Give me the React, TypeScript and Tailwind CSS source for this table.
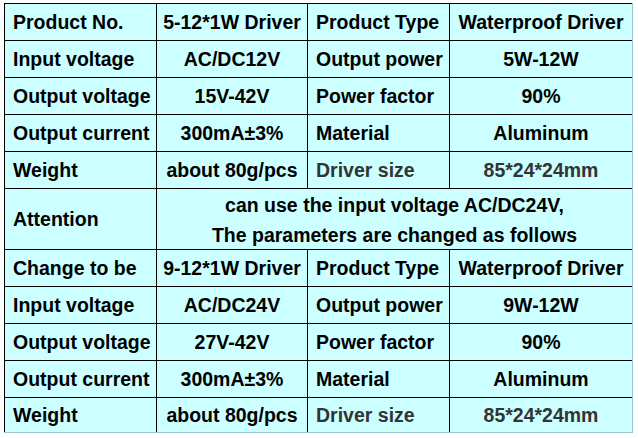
import React from "react";

type Cell = { text: string; center?: boolean; muted?: boolean };

const top: Cell[][] = [
  [{ text: "Product No." }, { text: "5-12*1W Driver", center: true }, { text: "Product Type" }, { text: "Waterproof Driver", center: true }],
  [{ text: "Input voltage" }, { text: "AC/DC12V", center: true }, { text: "Output power" }, { text: "5W-12W", center: true }],
  [{ text: "Output voltage" }, { text: "15V-42V", center: true }, { text: "Power factor" }, { text: "90%", center: true }],
  [{ text: "Output current" }, { text: "300mA±3%", center: true }, { text: "Material" }, { text: "Aluminum", center: true }],
  [{ text: "Weight" }, { text: "about 80g/pcs", center: true }, { text: "Driver size", muted: true }, { text: "85*24*24mm", center: true, muted: true }],
];

const bottom: Cell[][] = [
  [{ text: "Change to be" }, { text: "9-12*1W Driver", center: true }, { text: "Product Type" }, { text: "Waterproof Driver", center: true }],
  [{ text: "Input voltage" }, { text: "AC/DC24V", center: true }, { text: "Output power" }, { text: "9W-12W", center: true }],
  [{ text: "Output voltage" }, { text: "27V-42V", center: true }, { text: "Power factor" }, { text: "90%", center: true }],
  [{ text: "Output current" }, { text: "300mA±3%", center: true }, { text: "Material" }, { text: "Aluminum", center: true }],
  [{ text: "Weight" }, { text: "about 80g/pcs", center: true }, { text: "Driver size", muted: true }, { text: "85*24*24mm", center: true, muted: true }],
];

// Arial in the source image is a touch taller than wide, so stretch it slightly
const Tall = ({ children }: { children: React.ReactNode }) => (
  <span className="inline-block scale-y-[1.08]">{children}</span>
);

const SpecCell = ({ cell }: { cell: Cell }) => (
  <div
    className={`flex items-center bg-[#ccffff] whitespace-nowrap ${
      cell.center ? "justify-center" : "pl-2"
    } ${cell.muted ? "text-[#333333]" : "text-black"}`}
  >
    <Tall>{cell.text}</Tall>
  </div>
);

export default function App() {
  return (
    <div className="w-[638px] h-[438px] bg-white pt-[3px] pl-[4px]">
      {/* Spec table */}
      <div
        className="grid w-[629px] grid-cols-[151px_150px_141px_182px] grid-rows-[repeat(5,36px)_60px_repeat(4,36px)_34px] gap-px bg-black pt-px pl-px border-r border-b border-[#9fc4cc] text-[19.5px] font-bold leading-none"
        style={{ fontFamily: '"Liberation Sans", Arial, sans-serif' }}
      >
        {top.flat().map((c, i) => (
          <SpecCell key={`t${i}`} cell={c} />
        ))}

        {/* Attention row */}
        <div className="flex items-center bg-[#ccffff] pl-2">
          <Tall>Attention</Tall>
        </div>
        <div className="col-span-3 flex flex-col items-center justify-center bg-[#ccffff] leading-[30px]">
          <Tall>can use the input voltage AC/DC24V,</Tall>
          <Tall>The parameters are changed as follows</Tall>
        </div>

        {bottom.flat().map((c, i) => (
          <SpecCell key={`b${i}`} cell={c} />
        ))}
      </div>
    </div>
  );
}
